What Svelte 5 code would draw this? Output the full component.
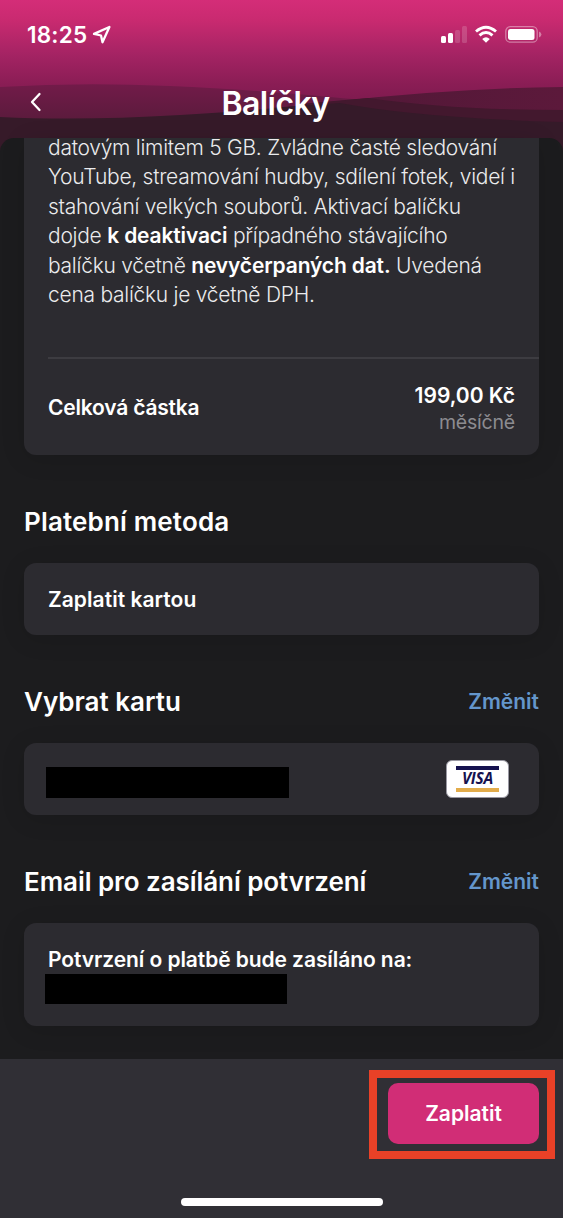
<script>
  let price = $state('199,00 Kč');
  let period = $state('měsíčně');

  function pay() {
    console.log('pay', price);
  }
</script>

<div class="screen">
  <header>
    <!-- Decorative waves behind the title -->
    <svg class="waves" viewBox="0 0 563 160" width="563" height="160" aria-hidden="true">
      <defs>
        <linearGradient id="left" x1="0" y1="0" x2="0" y2="1">
          <stop offset="0" stop-color="#721b49" />
          <stop offset="0.45" stop-color="#5c1b3d" />
          <stop offset="1" stop-color="#3a1a2a" />
        </linearGradient>
        <linearGradient id="low" x1="0" y1="0" x2="1" y2="0">
          <stop offset="0" stop-color="#361a29" />
          <stop offset="0.6" stop-color="#361a29" />
          <stop offset="0.68" stop-color="#541838" />
          <stop offset="1" stop-color="#5c193b" />
        </linearGradient>
      </defs>
      <path fill="url(#left)" d="M0 87Q82 82 170 86T330 97T563 110V160H0Z" />
      <path fill="url(#low)" d="M0 117Q80 121 180 115T340 101Q460 88 563 87V160H0Z" />
      <path fill="#43182e" d="M368 98Q450 110 563 110V160H300V104Z" />
      <path fill="#351a29" d="M270 108L340 103Q420 118 563 122V160H270Z" />
    </svg>
    <div class="status">
      <span class="time">18:25</span>
      <svg class="location" viewBox="0 0 20 20" width="20" height="20">
        <path d="M2 8.9L17.4 2L10.5 17.2L9 10.5Z" />
      </svg>
      <svg class="signals" viewBox="0 0 102 20" width="102" height="20">
        <rect x="0" y="11" width="5" height="7" rx="1.5" />
        <rect x="7" y="8" width="5" height="10" rx="1.5" />
        <g opacity="0.16">
          <rect x="14" y="5" width="5" height="13" rx="1.5" />
          <rect x="21" y="1" width="5" height="17" rx="1.5" />
        </g>
        <g class="wifi">
          <path d="M35 6.5Q45 -2 55 6.5" />
          <path d="M38.5 10.3Q45 4.5 51.5 10.3" />
        </g>
        <path d="M45 17.8L41.2 14Q45 10.6 48.8 14Z" />
        <rect class="shell" x="64.8" y="1.6" width="31.4" height="15.6" rx="4.5" />
        <rect x="67" y="4" width="26.5" height="11" rx="2.5" />
        <path opacity="0.4" d="M98 6.5Q100.4 7.5 100.4 9.5T98 12.5Z" />
      </svg>
    </div>
    <div class="nav">
      <svg class="back" viewBox="0 0 12 20" width="12" height="20">
        <path d="M9.5 2L2 10L9.5 18" />
      </svg>
      <h1>Balíčky</h1>
    </div>
  </header>

  <main>
    <section class="card summary">
      <p>
        <span>datovým limitem 5 GB. Zvládne časté sledování</span>
        <span>YouTube, streamování hudby, sdílení fotek, videí i</span>
        <span>stahování velkých souborů. Aktivací balíčku</span>
        <span>dojde <b>k deaktivaci</b> případného stávajícího</span>
        <span>balíčku včetně <b>nevyčerpaných dat.</b> Uvedená</span>
        <span>cena balíčku je včetně DPH.</span>
      </p>
      <div class="total">
        <strong>Celková částka</strong>
        <div class="amount">
          <strong>{price}</strong>
          <span>{period}</span>
        </div>
      </div>
    </section>

    <div class="heading"><h2 class="wide">Platební metoda</h2></div>
    <section class="card method"><strong>Zaplatit kartou</strong></section>

    <div class="heading">
      <h2>Vybrat kartu</h2>
      <a href="#card">Změnit</a>
    </div>
    <section class="card picked">
      <div class="hidden number"></div>
      <div class="visa"><span>VISA</span></div>
    </section>

    <div class="heading">
      <h2 class="narrow">Email pro zasílání potvrzení</h2>
      <a href="#email">Změnit</a>
    </div>
    <section class="card mail">
      <strong>Potvrzení o platbě bude zasíláno na:</strong>
      <div class="hidden address"></div>
    </section>
  </main>

  <footer>
    <div class="highlight">
      <button onclick={pay}>Zaplatit</button>
    </div>
    <div class="home"></div>
  </footer>
</div>

<style>
  :global(body) {
    margin: 0;
    background: #1c1c1e;
  }

  .screen {
    width: 563px;
    height: 1218px;
    display: flex;
    flex-direction: column;
    overflow: hidden;
    color: #fff;
    background: #1c1c1e;
    font-family: Inter, "Noto Sans", sans-serif;
  }

  header {
    position: relative;
    height: 138px;
    flex: none;
    background: linear-gradient(#d42d78 0, #c92a70 20px, #a32363 56px, #8a1d55 84px, #7c1a4d 105px);
  }

  .waves {
    position: absolute;
    top: 0;
    left: 0;
  }

  .status {
    position: relative;
    display: flex;
    align-items: center;
    height: 68px;
    padding: 1px 20px 0 27px;
    box-sizing: border-box;
  }

  .time {
    font-size: 22.5px;
    font-weight: 600;
    letter-spacing: 0.2px;
  }

  .location {
    margin-left: 5px;
    fill: none;
    stroke: #fff;
    stroke-width: 2.3;
    stroke-linejoin: round;
  }

  .signals {
    margin-left: auto;
    fill: #fff;
  }

  .wifi {
    fill: none;
    stroke: #fff;
    stroke-width: 2.9;
  }

  .shell {
    fill: none;
    stroke: #fff;
    stroke-opacity: 0.4;
    stroke-width: 1.3;
  }

  .nav {
    position: relative;
    display: grid;
    grid-template-columns: 60px 1fr 60px;
    align-items: center;
    height: 68px;
  }

  .back {
    margin-left: 30px;
    fill: none;
    stroke: #fff;
    stroke-width: 2.3;
    stroke-linecap: round;
    stroke-linejoin: round;
  }

  h1 {
    margin: 0;
    padding: 2px 12px 0 0;
    text-align: center;
    font-size: 32px;
    font-weight: 600;
    letter-spacing: -0.6px;
  }

  main {
    position: relative;
    height: 921px;
    flex: none;
    padding: 0 24px;
    box-sizing: border-box;
    border-radius: 14px 14px 0 0;
    background: #1c1c1e;
  }

  .card {
    box-sizing: border-box;
    border-radius: 12px;
    background: #2c2b30;
    box-shadow: 0 4px 24px rgba(0, 0, 0, 0.12);
  }

  .card strong {
    font-size: 21px;
    font-weight: 600;
    line-height: 28px;
    letter-spacing: -0.08px;
  }

  .summary {
    height: 317px;
    padding-left: 24px;
    border-radius: 0 0 12px 12px;
  }

  p {
    height: 221px;
    margin: 0;
    box-sizing: border-box;
    border-bottom: 2px solid #3d3c41;
    font-size: 21px;
    font-weight: 300;
    line-height: 29.5px;
    letter-spacing: -0.26px;
    color: #ebebed;
  }

  p span {
    display: block;
    white-space: nowrap;
    position: relative;
    top: -5.4px;
  }

  b {
    font-weight: 600;
    letter-spacing: -0.15px;
    color: #fff;
  }

  .total {
    display: flex;
    justify-content: space-between;
    align-items: center;
    height: 96px;
    padding: 2px 24px 0 0;
    box-sizing: border-box;
  }

  .total > strong {
    letter-spacing: -0.2px;
  }

  .amount {
    display: flex;
    flex-direction: column;
    align-items: flex-end;
    padding-top: 1px;
  }

  .amount strong {
    letter-spacing: 0;
  }

  .amount span {
    font-size: 19.5px;
    line-height: 25px;
    letter-spacing: -0.2px;
    color: #8c8c90;
  }

  .heading {
    display: flex;
    justify-content: space-between;
    align-items: center;
    height: 108px;
    padding-top: 24px;
    box-sizing: border-box;
  }

  h2 {
    margin: 0;
    font-size: 26px;
    font-weight: 600;
  }

  .wide {
    letter-spacing: 0.16px;
  }

  .narrow {
    letter-spacing: -0.06px;
  }

  a {
    font-size: 21px;
    font-weight: 600;
    color: #6496cb;
    text-decoration: none;
  }

  .method,
  .picked {
    display: flex;
    align-items: center;
    height: 72px;
    padding: 2px 24px 0;
  }

  .method strong {
    letter-spacing: 0.05px;
  }

  .picked {
    justify-content: space-between;
    padding: 0 30px 0 22px;
  }

  .hidden {
    background: #000;
  }

  .number {
    width: 243px;
    height: 31px;
    margin-top: 7px;
  }

  .visa {
    display: flex;
    align-items: center;
    justify-content: center;
    width: 63px;
    height: 38px;
    box-sizing: border-box;
    border: 1px solid #9998a2;
    border-radius: 6px;
    background: #fff;
  }

  .visa span {
    width: 43px;
    border-top: 4px solid #15124f;
    border-bottom: 4px solid #e2ac4b;
    padding-bottom: 2px;
    text-align: center;
    font-family: "Open Sans", sans-serif;
    font-size: 15.5px;
    font-weight: 700;
    font-style: italic;
    line-height: 16px;
    letter-spacing: -0.2px;
    color: #15124f;
  }

  .mail {
    height: 103px;
    padding: 23px 0 0 24px;
  }

  .mail strong {
    display: block;
    white-space: nowrap;
  }

  .address {
    width: 242px;
    height: 30px;
    margin-left: -3px;
  }

  footer {
    display: flex;
    flex-direction: column;
    align-items: center;
    height: 159px;
    flex: none;
    background: #302f35;
    z-index: 1;
  }

  .highlight {
    align-self: flex-end;
    width: 186px;
    height: 89px;
    margin: 11px 8px 0 0;
    padding: 5px 8px 0 11px;
    box-sizing: border-box;
    border: 8px solid #e94127;
  }

  button {
    display: block;
    width: 151px;
    height: 61px;
    padding: 0;
    border: 0;
    border-radius: 10px;
    background: #d12d76;
    color: #fff;
    font: 600 21px Inter, sans-serif;
  }

  .home {
    width: 202px;
    height: 8px;
    margin-top: 39px;
    border-radius: 4px;
    background: #fff;
  }
</style>
